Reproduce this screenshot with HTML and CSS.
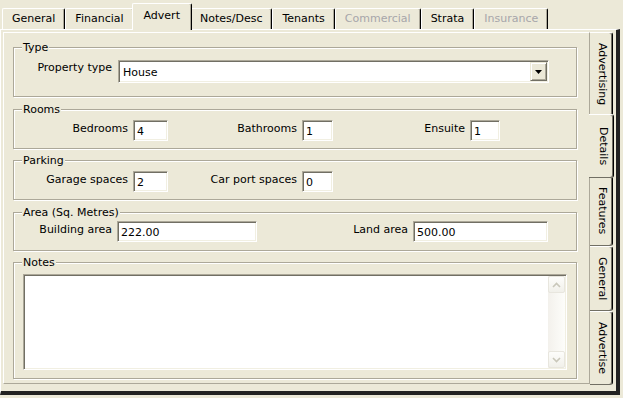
FILE: index.html
```html
<!doctype html>
<html>
<head>
<meta charset="utf-8">
<title>Property - Advert</title>
<link rel="stylesheet" href="styles.css">
</head>
<body>
<div class="window">
	<div class="tabstrip">
		<div class="tab">General</div>
		<div class="tab">Financial</div>
		<div class="tab active">Advert</div>
		<div class="tab">Notes/Desc</div>
		<div class="tab">Tenants</div>
		<div class="tab disabled">Commercial</div>
		<div class="tab">Strata</div>
		<div class="tab disabled">Insurance</div>
	</div>
	<div class="page">
		<div class="sheet">
			<fieldset class="group group_type">
				<legend>Type</legend>
				<div class="row row_type">
					<label class="lbl">Property type</label>
					<div class="combo">
						<span class="combo_text">House</span>
						<span class="combo_btn"><svg width="7" height="4" viewBox="0 0 7 4"><path d="M0 0h7L3.5 4z" fill="#000"/></svg></span>
					</div>
				</div>
			</fieldset>
			<fieldset class="group group_rooms">
				<legend>Rooms</legend>
				<div class="row row_rooms">
					<label class="lbl">Bedrooms</label>
					<input class="edit" type="text" value="4">
					<label class="lbl">Bathrooms</label>
					<input class="edit" type="text" value="1">
					<label class="lbl">Ensuite</label>
					<input class="edit" type="text" value="1">
				</div>
			</fieldset>
			<fieldset class="group group_parking">
				<legend>Parking</legend>
				<div class="row row_rooms">
					<label class="lbl">Garage spaces</label>
					<input class="edit" type="text" value="2">
					<label class="lbl">Car port spaces</label>
					<input class="edit" type="text" value="0">
				</div>
			</fieldset>
			<fieldset class="group group_area">
				<legend>Area (Sq. Metres)</legend>
				<div class="row row_area">
					<label class="lbl">Building area</label>
					<input class="edit" type="text" value="222.00">
					<label class="lbl">Land area</label>
					<input class="edit" type="text" value="500.00">
				</div>
			</fieldset>
			<fieldset class="group group_notes">
				<legend>Notes</legend>
				<div class="memo">
					<div class="memo_text"></div>
					<div class="scroll">
						<div class="sbtn"><svg width="9" height="6" viewBox="0 0 9 6"><path d="M1 5l3.5-3.5L8 5" fill="none" stroke="#c9c7ba" stroke-width="1.6"/></svg></div>
						<div class="strack"></div>
						<div class="sbtn"><svg width="9" height="6" viewBox="0 0 9 6"><path d="M1 1l3.5 3.5L8 1" fill="none" stroke="#c9c7ba" stroke-width="1.6"/></svg></div>
					</div>
				</div>
			</fieldset>
		</div>
		<div class="vtabs">
			<div class="vtab">Advertising</div>
			<div class="vtab active">Details</div>
			<div class="vtab">Features</div>
			<div class="vtab">General</div>
			<div class="vtab">Advertise</div>
		</div>
	</div>
</div>
</body>
</html>
```

FILE: styles.css
```css
* {margin: 0; padding: 0; box-sizing: border-box;}
body {
	background: #ece9d8;
	font: 11px 'DejaVu Sans', Tahoma, sans-serif;
	color: #000;
}
.window {
	width: 621px;
	height: 398px;
}

/* top tabs */
.tabstrip {
	display: flex;
	align-items: flex-end;
	height: 29px;
	padding-left: 2px;
}
.tab {
	height: 21px;
	line-height: 19px;
	padding: 0 9px;
	border-top: 1px solid #fff;
	border-left: 1px solid #fff;
	border-right: 1px solid #000;
	box-shadow: inset -1px 0 #aca899;
	border-radius: 2px 2px 0 0;
	white-space: nowrap;
}
.tab.active {
	position: relative;
	z-index: 1;
	height: 27px;
	line-height: 24px;
	margin: 0 -2px -1px;
	padding: 0 11px;
	background: #ece9d8;
}
.tab.disabled {color: #a7a6aa;}

/* page */
.page {
	display: flex;
	width: 620px;
	height: 366px;
	border-top: 1px solid #fff;
	border-left: 1px solid #fff;
	border-right: 4px solid #222;
	border-bottom: 4px solid #222;
	padding: 2px 3px 7px 2px;
}
.sheet {
	flex: none;
	width: 587px;
	border-top: 1px solid #fff;
	border-left: 1px solid #fff;
	border-right: 1px solid #aca899;
	border-bottom: 1px solid #aca899;
	padding: 8px 12px 0 9px;
}

/* group boxes */
.group {
	min-width: 0;
	border: 1px solid #aca899;
	box-shadow: inset 1px 1px #fff, 1px 1px #fff;
}
.group + .group {margin-top: 5px;}
.group legend {
	margin-left: 8px;
	padding: 0 1px;
	line-height: 13px;
	background: #ece9d8;
}
.group_type {padding: 6px 0 13px;}
.group_rooms {padding: 4px 0 7px; margin-top: 6px !important;}
.group_parking {padding: 4px 0 7px;}
.group_area {padding: 2px 0 8px; margin-top: 6px !important;}
.group_notes {padding: 5px 0 8px;}

.row {
	display: grid;
	align-items: start;
}
.row_type {grid-template-columns: 104px 431px;}
.row_rooms {grid-template-columns: 119px 35px 134px 31px 137px 30px;}
.row_area {grid-template-columns: 103px 140px 156px 135px;}

.lbl {
	text-align: right;
	padding: 2px 5px 0 0;
	line-height: 13px;
	white-space: nowrap;
}
.row_type .lbl {padding: 1px 6px 0 0;}

.edit {
	width: 100%;
	height: 21px;
	border: 1px solid;
	border-color: #aca899 #fff #fff #aca899;
	box-shadow: inset 1px 1px #716f64, inset -1px -1px #f1efe2;
	padding: 2px 3px 0;
	font: inherit;
	background: #fff;
	outline: none;
}

/* combo box */
.combo {
	display: flex;
	align-items: center;
	height: 23px;
	padding: 1px;
	background: #fff;
	border: 1px solid;
	border-color: #aca899 #fff #fff #aca899;
	box-shadow: inset 1px 1px #716f64, inset -1px -1px #f1efe2;
}
.combo_text {
	flex: 1;
	padding: 2px 0 0 3px;
}
.combo_btn {
	display: flex;
	align-items: center;
	justify-content: center;
	width: 17px;
	height: 19px;
	background: #ece9d8;
	border: 1px solid;
	border-color: #ece9d8 #716f64 #716f64 #ece9d8;
	box-shadow: inset 1px 1px #fff, inset -1px -1px #aca899;
}

/* notes memo */
.memo {
	display: flex;
	width: 544px;
	height: 96px;
	margin-left: 9px;
	padding: 1px;
	background: #fff;
	border: 1px solid;
	border-color: #aca899 #fff #fff #aca899;
	box-shadow: inset 1px 1px #716f64, inset -1px -1px #f1efe2;
}
.memo_text {flex: 1;}
.scroll {
	display: flex;
	flex-direction: column;
	width: 17px;
	background: linear-gradient(to right, #f3f1ec, #fdfdfa);
}
.sbtn {
	display: flex;
	align-items: center;
	justify-content: center;
	height: 17px;
	border: 1px solid #e8e6de;
	border-radius: 2px;
	background: linear-gradient(#fdfdfb, #f1f0ea);
}
.strack {flex: 1;}

/* side tabs */
.vtabs {
	display: flex;
	flex-direction: column;
	width: 23px;
}
.vtab {
	writing-mode: vertical-rl;
	width: 23px;
	padding: 10px 0;
	line-height: 20px;
	text-align: center;
	border-top: 1px solid #fff;
	border-right: 1px solid #000;
	border-bottom: 1px solid #716f64;
	box-shadow: inset -1px 0 #716f64;
	border-radius: 0 3px 3px 0;
	white-space: nowrap;
}
.vtab.active {
	position: relative;
	z-index: 1;
	width: 25px;
	margin: -2px 0 -2px -1px;
	padding: 12px 0 12px 1px;
	background: #ece9d8;
}
```
